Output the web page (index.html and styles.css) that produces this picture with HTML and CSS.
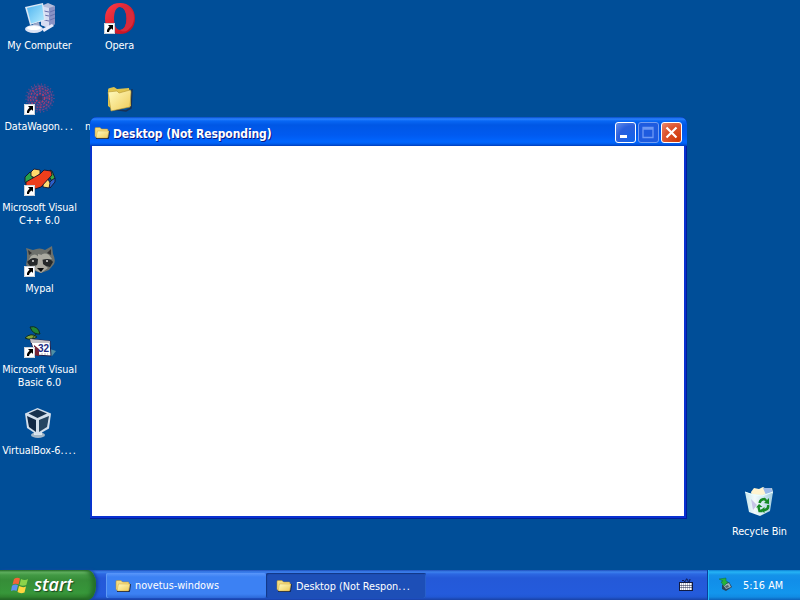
FILE: index.html
```html
<!DOCTYPE html>
<html lang="en">
<head>
<meta charset="utf-8">
<title>Desktop</title>
<link rel="stylesheet" href="styles.css">
</head>
<body>
<svg class="defs" width="0" height="0">
  <defs>
    <linearGradient id="paper" x1="0" y1="0" x2="1" y2="1"><stop offset="0" stop-color="#fffbc0"/><stop offset="1" stop-color="#efcb58"/></linearGradient>
    <linearGradient id="screen" x1="0" y1="0" x2="1" y2="1"><stop offset="0" stop-color="#4fb4f0"/><stop offset="1" stop-color="#b5ecff"/></linearGradient>
    <linearGradient id="red" x1="0" y1="0" x2="1" y2="1"><stop offset="0" stop-color="#ff3b48"/><stop offset="1" stop-color="#b80c1c"/></linearGradient>
    <linearGradient id="glass" x1="0" y1="0" x2="1" y2="0"><stop offset="0" stop-color="#c5e6ee"/><stop offset=".35" stop-color="#f4fbfb"/><stop offset="1" stop-color="#a5cfe0"/></linearGradient>
    <symbol id="shortcut" viewBox="0 0 11 11"><path fill="#fff" d="M0 0h11v11H0z"/><path d="M.5.5h10v10H.5z" fill="none" stroke="#a8b4c0" stroke-width=".6"/><path d="M4 2h5v5L7.600 5.600Q5 7 5 9H3Q2.500 6 5.600 3.700z"/></symbol>
    <symbol id="folder" viewBox="0 0 16 16"><path d="M2 13.500h12.500l1-7.500" fill="none" stroke="#15254c" stroke-width="1"/><path d="M1 3.500Q1 2.500 2 2.500h4l1.500 1.500H13q1 0 1 1V12H2q-1 0-1-1z" fill="#f4dc80" stroke="#b78d28" stroke-width=".5"/><path d="M3.500 6H15l-1.500 7H3Q2 13 2.200 12z" fill="url(#paper)" stroke="#c69b31" stroke-width=".4"/></symbol>
  </defs>
</svg>
<main class="desktop">
  <div class="item c1 r1">
    <svg class="icon" viewBox="0 0 32 32">
      <path d="M17 3l7-3 7 3v18l-7 4-7-3z" fill="#b5bddb"/><path d="M17 3l8 2v20l-8-3z" fill="#d7dcf2"/><path d="M25 5l6-2v18l-6 4z" fill="#8992c4"/><path d="M20 8l5 1m-5 3l5 1m-5 4l5 1m1-9l5-2m-5 6l5-2m-5 6l5-2" stroke="#6872ad"/>
      <path d="M1 4L19 0l3 17-16 5z" fill="#dce7f5"/><path d="M3 5l15-3.500 2 15-13 4z" fill="url(#screen)"/><path d="M9 21l6-2 1 5-6 1z" fill="#9ea8c8"/><ellipse cx="10" cy="26" rx="9" ry="4" fill="#dce3f5"/><ellipse cx="10" cy="25" rx="7" ry="2" fill="#fff"/><path d="M18 26l10-5 2 2-10 6z" fill="#e7eafa"/>
    </svg>
    <span class="label">My Computer</span>
  </div>
  <div class="item c2 r1">
    <svg class="icon" viewBox="0 0 32 32"><path fill-rule="evenodd" fill="url(#red)" d="M16 0C25 0 31 6 31 15.500S25 31 16 31 1 25 1 15.500 7 0 16 0zm0 4c-4 0-6 5-6 11.500S12 27 16 27s6.500-5 6.500-11.500S20 4 16 4z"/><path d="M16 4q4-3 8 0 6 4 6 11t-6 12q-4 3-8 0 6.500-1 6.500-11.500T16 4z" fill="#d92b3c"/><use href="#shortcut" x="0" y="20" width="11" height="11"/></svg>
    <span class="label">Opera</span>
  </div>
  <div class="item c1 r2">
    <svg class="icon" viewBox="0 0 32 32"><circle cx="16" cy="14" r="13" fill="#843d80" opacity=".25"/><g fill="none" stroke="#843d80" stroke-width="1.300" stroke-dasharray="2 1.300"><circle cx="16" cy="14" r="4.500" stroke="#ba3d68"/><circle cx="16" cy="14" r="7" stroke-dashoffset="1"/><circle cx="16" cy="14" r="9.500" stroke="#a93c70"/><circle cx="16" cy="14" r="12" stroke="#67498f" stroke-dashoffset="2"/><circle cx="16" cy="14" r="14" stroke="#754582" stroke-dasharray="1 2.500"/><path d="M16 2v24M4 14h24M8 6l16 16M24 6L8 22" stroke="#983c76" stroke-width=".9"/></g><circle cx="16" cy="14" r="2.500" fill="#33386d"/><use href="#shortcut" x="0" y="20" width="11" height="11"/></svg>
    <span class="label">DataWagon<span class="dots">...</span></span>
  </div>
  <div class="item c2 r2">
    <svg class="icon" viewBox="0 0 32 32"><path d="M7 25l15 2 5-3 1-19" fill="none" stroke="#183155" stroke-width="1.500"/><path d="M4 6q0-2 2-2l4-1 3 2 12-1 2 18-19 3-4-3z" fill="#dfc44e"/><path d="M4 8l9-1 2 2 11-3q1 0 1 2l-1 15-19 4z" fill="url(#paper)" stroke="#b7952f" stroke-width=".6"/></svg>
    <span class="label behind">n</span>
  </div>
  <div class="item c1 r3">
    <svg class="icon" viewBox="0 0 32 32"><g stroke="#14142b" stroke-width=".9"><path d="M6 7L1 12v5l4 5 4-4V9z" fill="#27a34a"/><path d="M7 7l3-3 6 1v4l-5 4-4-2z" fill="#ffd96c"/><path d="M26 5l2 1 3 7-3 3-4-6z" fill="#3caa42"/><path d="M28 15l3-2v4l-5 6-2-4z" fill="#2c60c9"/><path d="M19 18l5-4 2 4-1 5-6-1z" fill="#ffdf76"/><path d="M2 17L16 9l4-4 7 1 1 4-11 12-6 2-9-3z" fill="#ed3e1c"/></g><use href="#shortcut" x="0" y="20" width="11" height="11"/></svg>
    <span class="label">Microsoft Visual C++ 6.0</span>
  </div>
  <div class="item c1 r4">
    <svg class="icon" viewBox="0 0 32 32"><path d="M3 6L2 2l7 2q7-3 12 0l7-4 1 8q3 6 1 10l-5 6-8 3-9-3-6-5 1-6z" fill="#6c706b"/><path d="M4 4l4 3-3 2zM27 3l-4 4 4 2z" fill="#333"/><path d="M7 10q5-4 8 2 4-7 10-3l3 4-6 1-7-1-6 2-6 2z" fill="#a9aaa0"/><path d="M3 16q5-6 11-3l-1 6-7 1zM18 14q8-3 11 2l-3 5-7-2z" fill="#24282a"/><path d="M14 8l4 1 1 9 5 4-7 5-8-4 5-5z" fill="#aaa9a0"/><path d="M13 22h7l-3 4z" fill="#080b0d"/><circle cx="9" cy="15" r="1" fill="#ddd"/><circle cx="23" cy="15" r="1" fill="#ddd"/><use href="#shortcut" x="0" y="20" width="11" height="11"/></svg>
    <span class="label">Mypal</span>
  </div>
  <div class="item c1 r5">
    <svg class="icon" viewBox="0 0 32 32"><path d="M6 0q8-2 10 7-7 1-10-7z" fill="#238634" stroke="#102c22"/><path d="M1 11q6-6 12-1-6 4-12 1z" fill="#83a539" stroke="#102c22"/><path d="M8 15q0-5 5-9" stroke="#152d27" fill="none"/><path d="M26 22l6 2-4 5h-5z" fill="#4f8fa5"/><path d="M6 12l20 2 1 15-16-1z" fill="#fff" stroke="#20204c"/><path d="M6 12l20 2v2L7 16z" fill="#c3bfc3"/><path d="M10 18l5 4v7l-5-1z" fill="#772536"/><text class="calendar" x="14" y="25">32</text><path d="M17 27h7" stroke="#bbb" stroke-dasharray="2 1"/><use href="#shortcut" x="0" y="20" width="11" height="11"/></svg>
    <span class="label">Microsoft Visual Basic 6.0</span>
  </div>
  <div class="item c1 r6">
    <svg class="icon" viewBox="0 0 32 32"><ellipse cx="14" cy="27" rx="7" ry="3" fill="#a4b7c8"/><path d="M10 21h8v6h-8z" fill="#dce7ee"/><path d="M13.500 0L27 5.500l-2 15L13.500 27 3 20 1 5.500z" fill="#d3dfec"/><path d="M13.500 1.500L23 5.500l-9.500 4.500L4.500 5.500z" fill="#17314e"/><path d="M3 8l9 4v12l-7-5z" fill="#102845"/><path d="M25 8l-10 4v12l8-5z" fill="#264561"/></svg>
    <span class="label">VirtualBox-6<span class="dots">....</span></span>
  </div>
  <div class="item c10 r7">
    <svg class="icon" viewBox="0 0 32 32"><path d="M7 4l3-4 5 1 4-2 5 3 4-2 1 5-5 5H8z" fill="#fff4d0"/><path d="M19 0h8l2 4-7 3z" fill="#9bb9e9"/><path d="M1 4l8 2 9 1 11-3-3 19-10 5-11-4z" fill="url(#glass)"/><path d="M1 4l8 3 9 1 11-4" fill="none" stroke="#e9ffff"/><path d="M7 11l6 6-4 5z" fill="#c7c5e7"/><g fill="none" stroke="#168a25" stroke-width="2.400"><path d="M15.500 15q1-4 5-4l2 2"/><path d="M24 17q1 4-3 5h-2"/><path d="M14.500 19l1 4h3"/></g><path d="M25 10v6l-5-1zM12 19.500l3-3.500 3.500 3zM20.500 19v6l-4-3z" fill="#168a25"/></svg>
    <span class="label">Recycle Bin</span>
  </div>
</main>

<section class="window">
  <header class="titlebar">
    <svg class="small-icon" viewBox="0 0 16 16"><use href="#folder"/></svg>
    <h1 class="title">Desktop (Not Responding)</h1>
    <div class="controls">
      <button class="control" aria-label="Minimize"><svg viewBox="0 0 21 21"><path d="M5 13h7v3H5z" fill="#fff"/></svg></button>
      <button class="control disabled" aria-label="Maximize"><svg viewBox="0 0 21 21"><path d="M5 5.500h10v10H5zM5 7h10" fill="none" stroke="#6c98f4" stroke-width="1.300"/></svg></button>
      <button class="control close" aria-label="Close"><svg viewBox="0 0 21 21"><path d="M5.500 5.500l10 10m0-10l-10 10" fill="none" stroke="#fff" stroke-width="2.200"/></svg></button>
    </div>
  </header>
  <div class="client"></div>
</section>

<footer class="taskbar">
  <button class="start">
    <svg class="flag" viewBox="0 0 18 18"><path d="M3 3q3-2 6-.5L7.500 8.500Q5 7 1.500 8.500z" fill="#f26437"/><path d="M10 3q4 2 7 0l-1.700 6Q12 10.500 8.500 9z" fill="#8bd34a"/><path d="M1 9.700q3-2 6-.5L5.500 15Q3 13.500 0 15z" fill="#5e91f2"/><path d="M8 10q4 2 7 .5l-1.500 6q-4 1.500-7-.5z" fill="#ffd640"/></svg>
    <span class="start-text">start</span>
  </button>
  <div class="tasks">
    <div class="task"><svg class="small-icon" viewBox="0 0 16 16"><use href="#folder"/></svg><span class="task-text">novetus-windows</span></div>
    <div class="task active"><svg class="small-icon" viewBox="0 0 16 16"><use href="#folder"/></svg><span class="task-text">Desktop (Not Respon<span class="dots">...</span></span></div>
  </div>
  <svg class="keyboard" viewBox="0 0 14 14"><path d="M3 3q1-2 2 0t2-1 2 1 2-2" fill="none" stroke="#101b50"/><path d="M0 4h14v9H0z" fill="#101a42"/><path d="M1 6h12M1 8.500h12M1 11h12" stroke="#fff" stroke-width="1.800" stroke-dasharray="1.700 .3"/></svg>
  <div class="tray">
    <svg class="tray-icon" viewBox="0 0 16 16"><path d="M4 8l7-3 3 5-6 4-4-2z" fill="#28435a"/><path d="M5 8l6-2 2 4-5 2z" fill="#a2b4b8"/><path d="M7 9l3-1 1 2-3 1z" fill="#4d6670"/><path d="M1 2l7-1v3l2 1-4 4-3-4 2-1z" fill="#24b23a" stroke="#126b45" stroke-width=".5"/></svg>
    <span class="clock">5:16 AM</span>
  </div>
</footer>
</body>
</html>
```
FILE: styles.css
```css
* { box-sizing: border-box; }
body {
  margin: 0;
  width: 800px;
  height: 600px;
  overflow: hidden;
  position: relative;
  display: grid;
  grid-template-rows: 570px 30px;
  background: #004e98;
  color: #fff;
  font: 10.8px/13px "DejaVu Sans Condensed", "DejaVu Sans", sans-serif;
  font-stretch: condensed;
}
button { border: 0; padding: 0; color: inherit; }
.defs { position: absolute; }
.desktop {
  display: grid;
  grid-template-columns: repeat(10, 80px);
  grid-template-rows: repeat(7, 81px);
  height: 570px;
}
.item { display: flex; flex-direction: column; align-items: center; padding-top: 3px; text-align: center; }
.icon { width: 32px; height: 32px; margin-bottom: 4px; flex: none; overflow: visible; }
.label { width: 79px; margin-right: 1px; letter-spacing: -.1px; }
.dots { letter-spacing: 1px; }
.r2 .dots { letter-spacing: 1.8px; }
.behind { text-align: left; padding-left: 5px; }
.c1 { grid-column: 1; } .c2 { grid-column: 2; } .c10 { grid-column: 10; }
.r1 { grid-row: 1; } .r2 { grid-row: 2; } .r3 { grid-row: 3; } .r4 { grid-row: 4; }
.r5 { grid-row: 5; } .r6 { grid-row: 6; } .r7 { grid-row: 7; }
.r7 .icon { margin: -1px 0 5px; }
.calendar { font: bold 10px "Liberation Sans", sans-serif; fill: #202a82; }
.window {
  position: absolute;
  left: 90px;
  top: 117px;
  width: 597px;
  height: 402px;
  display: flex;
  flex-direction: column;
  padding: 0 3px 3px 2px;
  border-radius: 7px 7px 0 0;
  background: #0831d1;
  box-shadow: inset -1px -1px #001d9c, inset 1px 0 #0639c4;
}
.titlebar {
  height: 29px;
  margin: 0 -3px 0 -2px;
  padding: 2px 5px 0 4px;
  display: flex;
  align-items: center;
  border-radius: 7px 7px 0 0;
  background: linear-gradient(#064bc8 0, #2b82ff 2px, #0867f4 4px, #0057e5 8px, #005af0 18px, #0066ff 25px, #005be9 27px, #003dbb 29px);
}
.small-icon { width: 16px; height: 16px; flex: none; }
.title {
  margin: 2px 0 0 3px;
  font: bold 12px/16px "DejaVu Sans Condensed", sans-serif;
  font-stretch: condensed;
  letter-spacing: -.1px;
  text-shadow: 1px 1px #0a1883;
  white-space: nowrap;
}
.controls { margin-left: auto; display: flex; gap: 2px; }
.control {
  width: 21px;
  height: 21px;
  border: 1px solid #fff;
  border-radius: 3px;
  background: radial-gradient(circle at 85% 90%, #1264eb, #2a5fdd 60%, #6590ec);
}
.control svg { display: block; width: 21px; height: 21px; margin: -1px; }
.disabled { border-color: #739ef2; background: #1e5bdf; }
.close { background: radial-gradient(circle at 85% 90%, #cf3908, #dc542f 60%, #ec8b72); }
.client { flex: 1; background: #fff; }
.taskbar {
  display: flex;
  background: linear-gradient(#1f50bc 0, #3d82ee 2px, #2c67e2 4px, #2459d8 8px, #245bdc 24px, #2158d4 27px, #1941a5 30px);
}
.start {
  width: 96px;
  display: flex;
  align-items: center;
  padding: 0 0 1px 11px;
  gap: 5px;
  border-radius: 0 9px 9px 0 / 0 14px 14px 0;
  background: linear-gradient(#286f29 0, #69b868 2px, #429944 5px, #368d38 10px, #37973a 23px, #30832f 27px, #205f23 30px);
  box-shadow: inset -4px 0 4px #246e29, 2px 0 3px #1744a5;
}
.flag { width: 18px; height: 18px; }
.start-text {
  font: italic 600 18px/20px "Open Sans", "Noto Sans", sans-serif;
  letter-spacing: -.1px;
  text-shadow: 1px 1px 1px #17491e;
  margin-top: -1px;
}
.tasks { display: flex; margin: 3px 0 2px 10px; }
.task {
  width: 160px;
  display: flex;
  align-items: center;
  gap: 4px;
  padding-left: 9px;
  border-radius: 2px;
  white-space: nowrap;
  background: linear-gradient(#5a97fa, #3c81f3 4px, #3c81f3 21px, #2c68d7);
  box-shadow: inset 1px 0 #609bf5;
}
.active {
  padding: 1px 0 0 10px;
  background: #1d4fb7;
  box-shadow: inset 1px 1px 1px #123785, inset -1px 0 #2860cb;
}
.task-text { letter-spacing: -.02px; }
.task-text .dots { letter-spacing: 1.2px; }
.keyboard { width: 14px; height: 14px; margin: 8px 14px 0 auto; }
.tray {
  width: 93px;
  display: flex;
  align-items: center;
  padding-left: 10px;
  border-left: 1px solid #083f9b;
  background: linear-gradient(#0d7fd4 0, #25b4f5 2px, #1593e9 5px, #118ee9 10px, #1296ed 23px, #118be3 27px, #0c62ba 30px);
  box-shadow: inset 1px 0 #20b8f7;
}
.tray-icon { width: 16px; height: 16px; }
.clock { margin-left: 9px; white-space: nowrap; letter-spacing: .05px; }
```
